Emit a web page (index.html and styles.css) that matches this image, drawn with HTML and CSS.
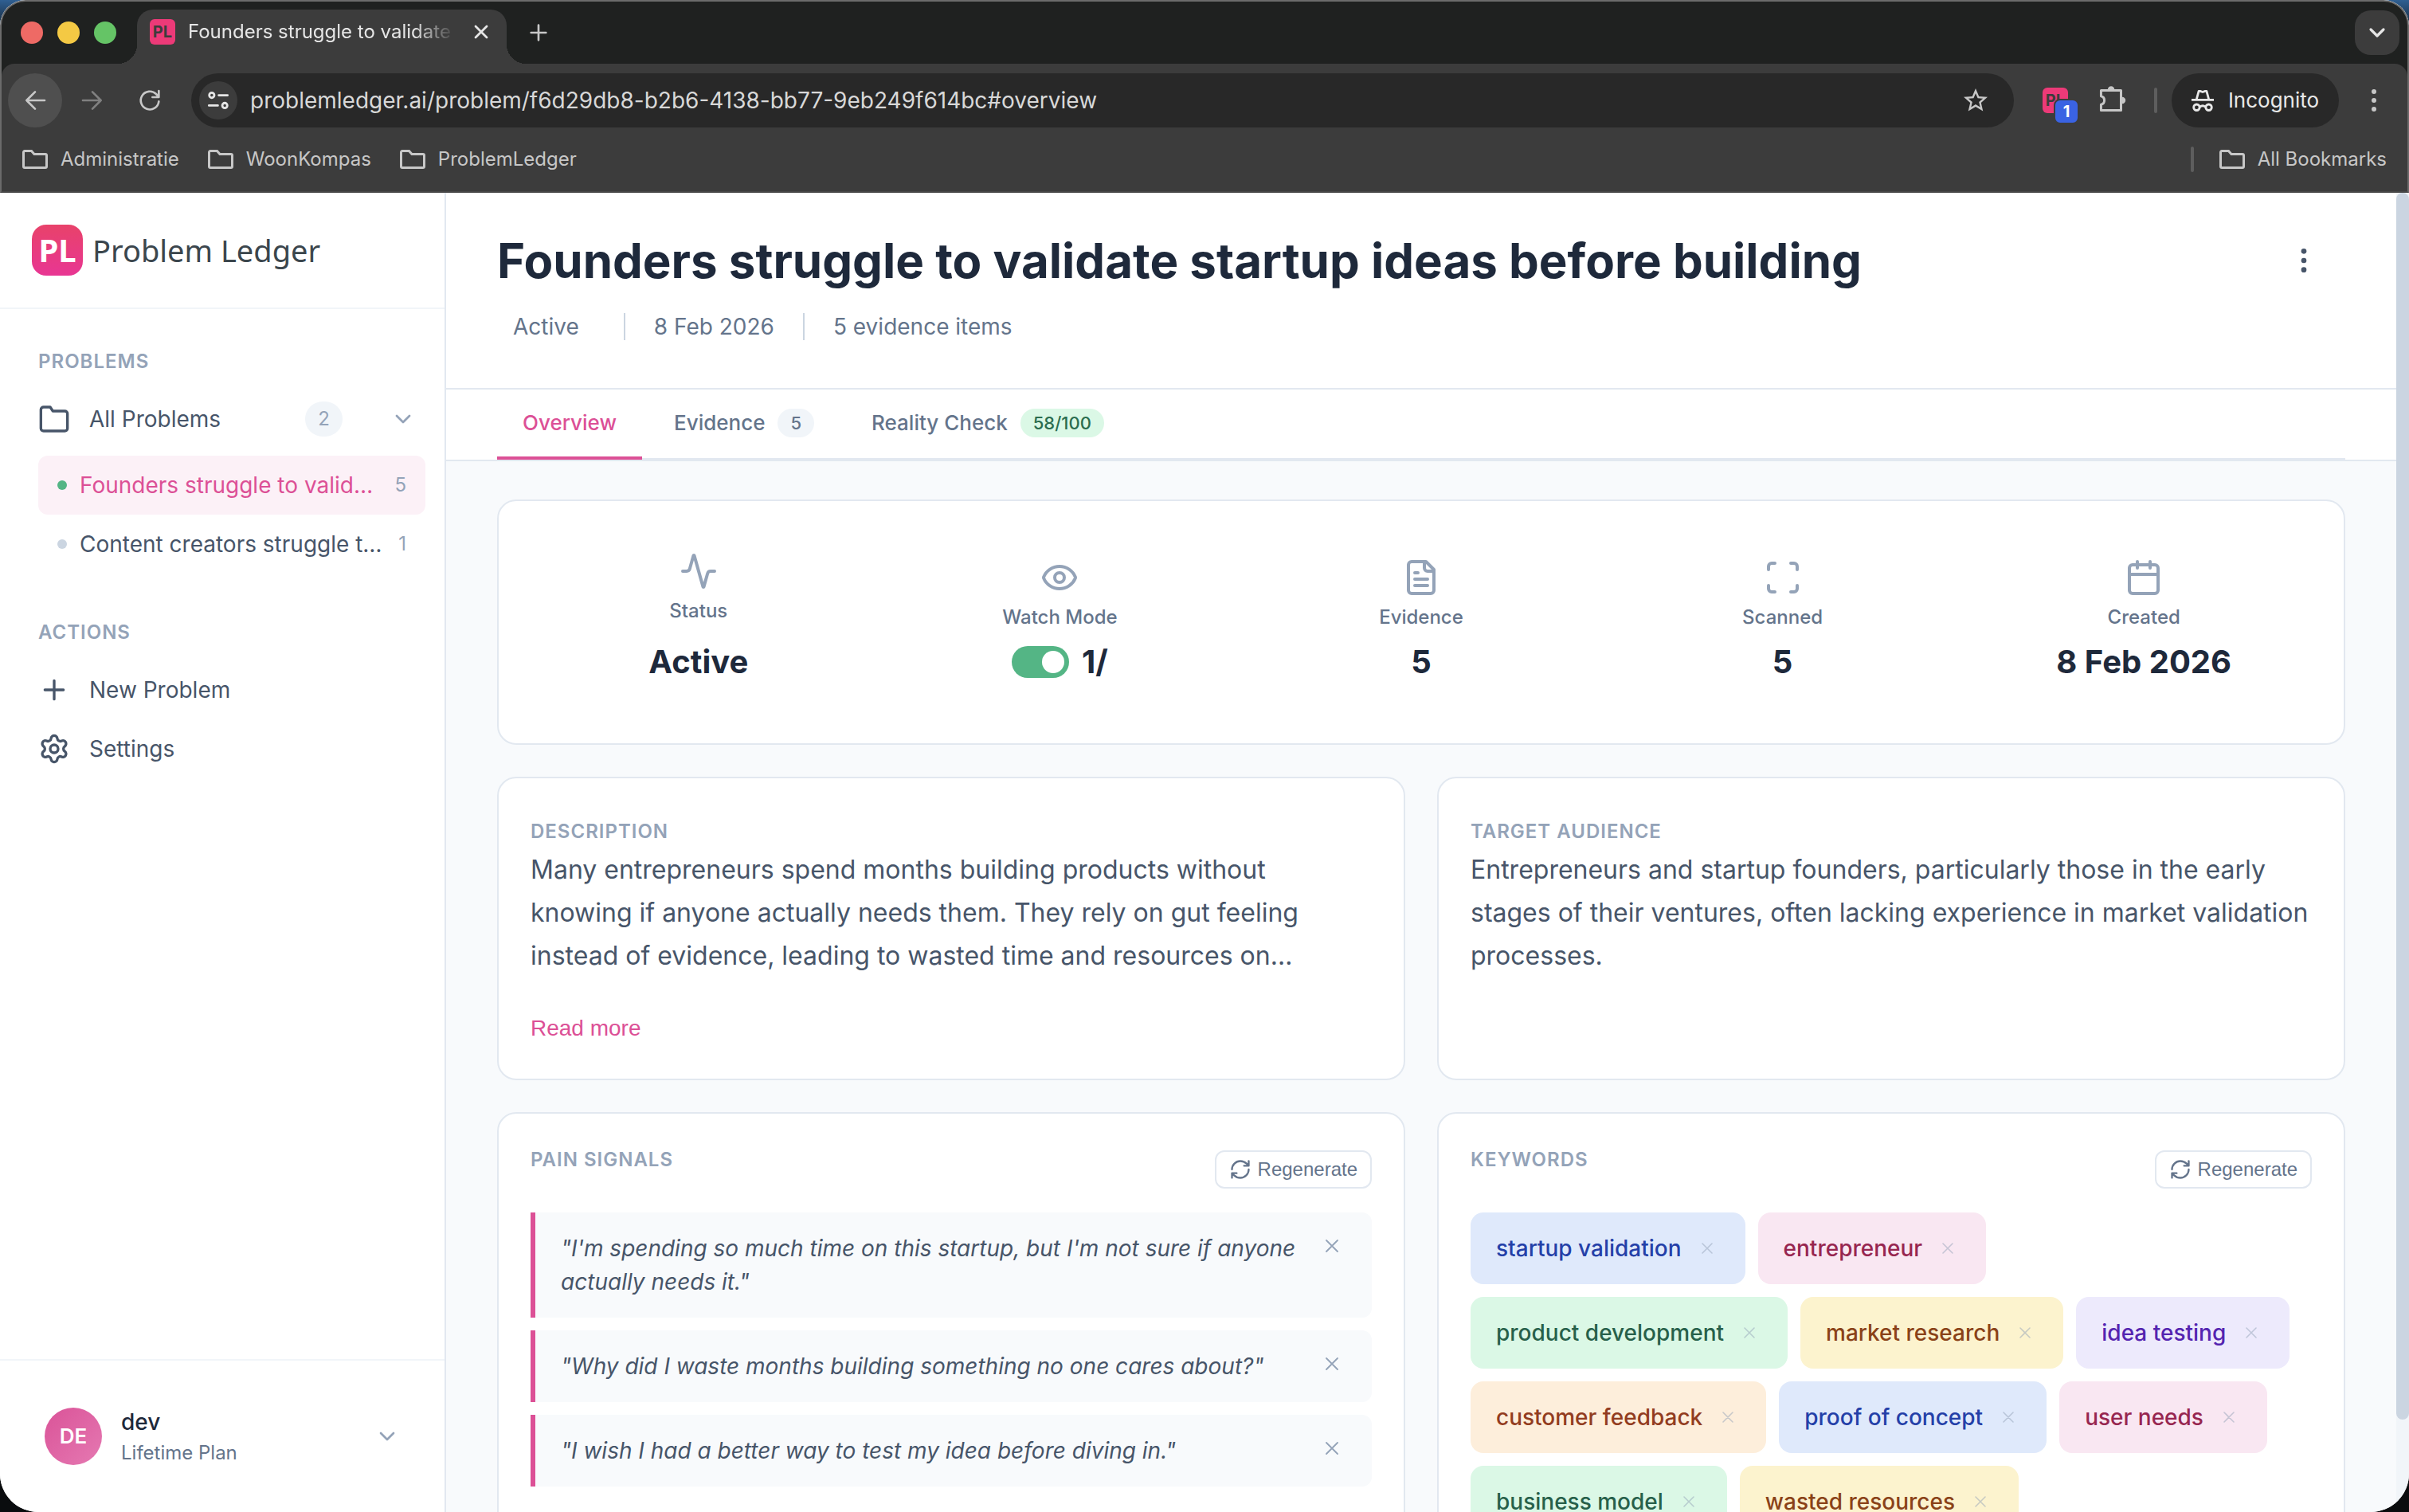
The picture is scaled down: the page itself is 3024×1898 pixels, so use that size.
FILE: index.html
```html
<!DOCTYPE html>
<html lang="en">
<head>
<meta charset="utf-8">
<meta name="viewport" content="width=device-width, initial-scale=1">
<title>Founders struggle to validate startup ideas before building</title>
<link rel="stylesheet" href="styles.css">
</head>
<body>
<svg class="sprite" aria-hidden="true">
  <symbol id="i-folder" viewBox="0 0 24 24"><path d="M22 19a2 2 0 0 1-2 2H4a2 2 0 0 1-2-2V5a2 2 0 0 1 2-2h5l2 3h9a2 2 0 0 1 2 2z"/></symbol>
  <symbol id="i-chevron" viewBox="0 0 24 24"><path d="m6 9 6 6 6-6"/></symbol>
  <symbol id="i-plus" viewBox="0 0 24 24"><path d="M5 12h14M12 5v14"/></symbol>
  <symbol id="i-x" viewBox="0 0 24 24"><path d="M18 6 6 18M6 6l12 12"/></symbol>
  <symbol id="i-refresh" viewBox="0 0 24 24"><path d="M3 12a9 9 0 0 1 9-9 9.75 9.75 0 0 1 6.74 2.74L21 8M21 3v5h-5M21 12a9 9 0 0 1-9 9 9.75 9.75 0 0 1-6.74-2.74L3 16M8 16H3v5"/></symbol>
  <symbol id="i-bookmark-folder" viewBox="0 0 32 24"><path d="M3 1.500h8.500l3.500 4h14a1.500 1.500 0 0 1 1.500 1.500v14a1.500 1.500 0 0 1-1.500 1.500H3a1.500 1.500 0 0 1-1.500-1.500V3A1.500 1.500 0 0 1 3 1.500z"/></symbol>
</svg>

<div class="window">
  <header class="browser">
    <div class="tabstrip">
      <div class="lights"><span class="light red"></span><span class="light yellow"></span><span class="light green"></span></div>
      <div class="tab">
        <span class="favicon">PL</span>
        <span class="tab-title">Founders struggle to validate</span>
        <button class="chrome-btn tab-close" aria-label="Close tab"><svg class="icon s28 heavy"><use href="#i-x"/></svg></button>
      </div>
      <button class="chrome-btn new-tab" aria-label="New tab"><svg class="icon s32"><use href="#i-plus"/></svg></button>
      <button class="chrome-btn tab-search" aria-label="Search tabs"><svg class="icon s32 heavy"><use href="#i-chevron"/></svg></button>
    </div>
    <div class="toolbar">
      <div class="nav-buttons">
        <button class="chrome-btn nav-btn back" aria-label="Back"><svg class="icon s32" viewBox="0 0 24 24"><path d="M21 12H4M12 4l-8 8 8 8"/></svg></button>
        <button class="chrome-btn nav-btn forward" aria-label="Forward"><svg class="icon s32" viewBox="0 0 24 24"><path d="M3 12h17M12 4l8 8-8 8"/></svg></button>
        <button class="chrome-btn nav-btn" aria-label="Reload"><svg class="icon s32" viewBox="0 0 24 24"><path d="M20.500 13A8.500 8.500 0 1 1 18 6l2.500 2.800M20.500 3v6h-6"/></svg></button>
      </div>
      <div class="omnibox">
        <button class="chrome-btn site-info" aria-label="Site information"><svg class="icon s28 heavy" viewBox="0 0 24 24"><circle cx="5" cy="6.500" r="2.700"/><path d="M12.500 6.500H22M2 17.500h9.500"/><circle cx="19" cy="17.500" r="2.700"/></svg></button>
        <input class="url" type="text" aria-label="Address" value="problemledger.ai/problem/f6d29db8-b2b6-4138-bb77-9eb249f614bc#overview">
        <button class="chrome-btn" aria-label="Bookmark this tab"><svg class="s36 solid" viewBox="0 0 24 24"><path d="M22 9.240l-7.190-.620L12 2 9.190 8.630 2 9.240l5.460 4.730L5.820 21 12 17.270 18.180 21l-1.630-7.030L22 9.240zM12 15.400l-3.760 2.270 1-4.280-3.320-2.880 4.380-.38L12 6.100l1.710 4.040 4.380.38-3.320 2.880 1 4.280L12 15.400z"/></svg></button>
      </div>
      <div class="extensions">
        <button class="chrome-btn nav-btn ext" aria-label="Problem Ledger extension"><span class="favicon">PL</span><span class="ext-badge">1</span></button>
        <button class="chrome-btn nav-btn" aria-label="Extensions"><svg class="icon s36" viewBox="0 0 24 24"><path d="M2.300 3.700h16.700v16.700H2.300v-4.900a3.600 3.600 0 0 0 0-7z"/><path class="fill" d="M8.400 3a2.300 2.300 0 0 1 4.600 0zM20 9.700a2.300 2.300 0 0 1 0 4.600z"/></svg></button>
      </div>
      <span class="bar-divider"></span>
      <button class="chrome-btn incognito"><svg class="icon s28 heavy" viewBox="0 0 24 24"><path d="M0 11.500h24M5.500 10.500 7.800 2h1.500l2.700 1 2.700-1h1.500l2.300 8.500M9 19c2-1.600 4-1.600 6 0"/><circle cx="5.500" cy="19.500" r="3.200"/><circle cx="18.500" cy="19.500" r="3.200"/></svg>Incognito</button>
      <button class="chrome-btn nav-btn menu-btn" aria-label="Browser menu"><svg class="s36 solid" viewBox="0 0 24 24"><circle cx="12" cy="4.700" r="2"/><circle cx="12" cy="12" r="2"/><circle cx="12" cy="19.300" r="2"/></svg></button>
    </div>
    <nav class="bookmarks" aria-label="Bookmarks">
      <button class="chrome-btn bookmark"><svg class="folder-icon"><use href="#i-bookmark-folder"/></svg>Administratie</button>
      <button class="chrome-btn bookmark"><svg class="folder-icon"><use href="#i-bookmark-folder"/></svg>WoonKompas</button>
      <button class="chrome-btn bookmark"><svg class="folder-icon"><use href="#i-bookmark-folder"/></svg>ProblemLedger</button>
      <span class="bar-divider push"></span>
      <button class="chrome-btn bookmark"><svg class="folder-icon"><use href="#i-bookmark-folder"/></svg>All Bookmarks</button>
    </nav>
  </header>

  <div class="app">
    <aside class="sidebar">
      <a class="brand" href="#"><span class="brand-mark">PL</span><span class="brand-name">Problem Ledger</span></a>
      <nav class="side-nav">
        <section>
          <h2 class="label side-label">PROBLEMS</h2>
          <button class="side-row"><svg class="icon s40"><use href="#i-folder"/></svg>All Problems<span class="count-pill">2</span><svg class="icon s32 muted"><use href="#i-chevron"/></svg></button>
          <div class="problem-list">
            <a class="problem active" href="#overview"><span class="dot"></span><span class="problem-name">Founders struggle to valid…</span><span class="problem-count">5</span></a>
            <a class="problem" href="#"><span class="dot"></span><span class="problem-name">Content creators struggle t…</span><span class="problem-count">1</span></a>
          </div>
        </section>
        <section>
          <h2 class="label side-label">ACTIONS</h2>
          <a class="side-row" href="#"><svg class="icon s40"><use href="#i-plus"/></svg>New Problem</a>
          <a class="side-row" href="#"><svg class="icon s40" viewBox="0 0 24 24"><path d="M9.671 4.136a2.340 2.340 0 0 1 4.659 0 2.340 2.340 0 0 0 3.319 1.915 2.340 2.340 0 0 1 2.330 4.033 2.340 2.340 0 0 0 0 3.831 2.340 2.340 0 0 1-2.330 4.033 2.340 2.340 0 0 0-3.319 1.915 2.340 2.340 0 0 1-4.659 0 2.340 2.340 0 0 0-3.320-1.915 2.340 2.340 0 0 1-2.330-4.033 2.340 2.340 0 0 0 0-3.831A2.340 2.340 0 0 1 6.350 6.051a2.340 2.340 0 0 0 3.319-1.915"/><circle cx="12" cy="12" r="3"/></svg>Settings</a>
        </section>
      </nav>
      <button class="account">
        <span class="avatar">DE</span>
        <span class="account-text"><span class="account-name">dev</span><span class="account-plan">Lifetime Plan</span></span>
        <svg class="icon s32 muted"><use href="#i-chevron"/></svg>
      </button>
    </aside>

    <main class="main">
      <header class="page-head">
        <div class="title-row">
          <h1>Founders struggle to validate startup ideas before building</h1>
          <button class="kebab" aria-label="More options"><svg class="s40 solid" viewBox="0 0 24 24"><circle cx="12" cy="5" r="2"/><circle cx="12" cy="12" r="2"/><circle cx="12" cy="19" r="2"/></svg></button>
        </div>
        <div class="meta"><span class="meta-status">Active</span><span>8 Feb 2026</span><span>5 evidence items</span></div>
      </header>
      <div class="tabs-bar">
        <nav class="tabs">
          <a class="page-tab current" href="#overview">Overview</a>
          <a class="page-tab" href="#evidence">Evidence<span class="tab-pill">5</span></a>
          <a class="page-tab" href="#reality">Reality Check<span class="tab-pill good">58/100</span></a>
        </nav>
      </div>

      <div class="content">
        <section class="card stats">
          <div class="stat">
            <svg class="icon s48 muted" viewBox="0 0 24 24"><path d="M22 12h-2.480a2 2 0 0 0-1.930 1.460l-2.350 8.360a.25.25 0 0 1-.48 0L9.240 2.180a.25.25 0 0 0-.48 0l-2.350 8.360A2 2 0 0 1 4.490 12H2"/></svg>
            <span class="stat-label">Status</span><span class="stat-value tall">Active</span>
          </div>
          <div class="stat">
            <svg class="icon s48 muted" viewBox="0 0 24 24"><path d="M2.062 12.348a1 1 0 0 1 0-.696 10.750 10.750 0 0 1 19.876 0 1 1 0 0 1 0 .696 10.750 10.750 0 0 1-19.876 0"/><circle cx="12" cy="12" r="3"/></svg>
            <label class="stat-label" for="watch">Watch Mode</label><span class="stat-value"><input class="toggle" type="checkbox" id="watch" checked>1/</span>
          </div>
          <div class="stat">
            <svg class="icon s48 muted" viewBox="0 0 24 24"><path d="M15 2H6a2 2 0 0 0-2 2v16a2 2 0 0 0 2 2h12a2 2 0 0 0 2-2V7zM14 2v4a2 2 0 0 0 2 2h4M10 9H8M16 13H8M16 17H8"/></svg>
            <span class="stat-label">Evidence</span><span class="stat-value">5</span>
          </div>
          <div class="stat">
            <svg class="icon s48 muted" viewBox="0 0 24 24"><path d="M3 7V5a2 2 0 0 1 2-2h2M17 3h2a2 2 0 0 1 2 2v2M21 17v2a2 2 0 0 1-2 2h-2M7 21H5a2 2 0 0 1-2-2v-2"/></svg>
            <span class="stat-label">Scanned</span><span class="stat-value">5</span>
          </div>
          <div class="stat">
            <svg class="icon s48 muted" viewBox="0 0 24 24"><rect x="3" y="4" width="18" height="18" rx="2"/><path d="M8 2v4M16 2v4M3 10h18"/></svg>
            <span class="stat-label">Created</span><span class="stat-value">8 Feb 2026</span>
          </div>
        </section>

        <div class="pair">
          <section class="card text-card">
            <h2 class="label">DESCRIPTION</h2>
            <p>Many entrepreneurs spend months building products without knowing if anyone actually needs them. They rely on gut feeling instead of evidence, leading to wasted time and resources on…</p>
            <button class="read-more">Read more</button>
          </section>
          <section class="card text-card">
            <h2 class="label">TARGET AUDIENCE</h2>
            <p>Entrepreneurs and startup founders, particularly those in the early stages of their ventures, often lacking experience in market validation processes.</p>
          </section>
        </div>

        <div class="pair">
          <section class="card list-card">
            <div class="card-head"><h2 class="label">PAIN SIGNALS</h2><button class="regenerate"><svg class="icon s28"><use href="#i-refresh"/></svg>Regenerate</button></div>
            <ul class="signals">
              <li class="signal"><q>I'm spending so much time on this startup, but I'm not sure if anyone actually needs it.</q><button class="remove" aria-label="Remove"><svg class="icon s28 thin"><use href="#i-x"/></svg></button></li>
              <li class="signal"><q>Why did I waste months building something no one cares about?</q><button class="remove" aria-label="Remove"><svg class="icon s28 thin"><use href="#i-x"/></svg></button></li>
              <li class="signal"><q>I wish I had a better way to test my idea before diving in.</q><button class="remove" aria-label="Remove"><svg class="icon s28 thin"><use href="#i-x"/></svg></button></li>
            </ul>
          </section>
          <section class="card list-card">
            <div class="card-head"><h2 class="label">KEYWORDS</h2><button class="regenerate"><svg class="icon s28"><use href="#i-refresh"/></svg>Regenerate</button></div>
            <ul class="keywords">
              <li class="keyword blue">startup validation<button aria-label="Remove"><svg class="icon s24 thin"><use href="#i-x"/></svg></button></li>
              <li class="keyword pink">entrepreneur<button aria-label="Remove"><svg class="icon s24 thin"><use href="#i-x"/></svg></button></li>
              <li class="keyword green">product development<button aria-label="Remove"><svg class="icon s24 thin"><use href="#i-x"/></svg></button></li>
              <li class="keyword amber">market research<button aria-label="Remove"><svg class="icon s24 thin"><use href="#i-x"/></svg></button></li>
              <li class="keyword violet">idea testing<button aria-label="Remove"><svg class="icon s24 thin"><use href="#i-x"/></svg></button></li>
              <li class="keyword orange">customer feedback<button aria-label="Remove"><svg class="icon s24 thin"><use href="#i-x"/></svg></button></li>
              <li class="keyword blue">proof of concept<button aria-label="Remove"><svg class="icon s24 thin"><use href="#i-x"/></svg></button></li>
              <li class="keyword pink">user needs<button aria-label="Remove"><svg class="icon s24 thin"><use href="#i-x"/></svg></button></li>
              <li class="keyword green">business model<button aria-label="Remove"><svg class="icon s24 thin"><use href="#i-x"/></svg></button></li>
              <li class="keyword amber">wasted resources<button aria-label="Remove"><svg class="icon s24 thin"><use href="#i-x"/></svg></button></li>
            </ul>
          </section>
        </div>
      </div>
    </main>
    <div class="scrollbar"><div class="scroll-thumb"></div></div>
  </div>
</div>
</body>
</html>
```
FILE: styles.css
```css
:root {
  --pink: #dc5096;
  --ink: #1e293b;
  --slate: #475569;
  --soft: #64748b;
  --muted: #94a3b8;
  --line: #e2e8f0;
  --faint: #f1f5f9;
  --wash: #f8fafc;
  --chrome: #3c3c3c;
  --chrome-text: #c7c7c7;
}

* { box-sizing: border-box; }

body {
  margin: 0;
  height: 100vh;
  overflow: hidden;
  background: linear-gradient(#2f5f92, #0a0c0e 48px);
  font-family: Inter, "Liberation Sans", sans-serif;
  font-size: 28px;
  line-height: 42px;
  color: var(--slate);
}

h1, h2, p, ul { margin: 0; padding: 0; }
ul { list-style: none; }
a { color: inherit; text-decoration: none; }
button { margin: 0; padding: 0; border: 0; background: none; color: inherit; font: inherit; text-align: left; }

.sprite { position: absolute; width: 0; height: 0; }
.icon { flex: none; fill: none; stroke: currentColor; stroke-width: 2; stroke-linecap: round; stroke-linejoin: round; }
.icon.heavy { stroke-width: 2.4; }
.icon.thin { stroke-width: 1.6; }
.icon .fill { fill: currentColor; stroke-width: 1; }
.solid { flex: none; fill: currentColor; }
.muted { color: var(--muted); }
.s24 { width: 24px; height: 24px; }
.s28 { width: 28px; height: 28px; }
.s32 { width: 32px; height: 32px; }
.s36 { width: 36px; height: 36px; }
.s40 { width: 40px; height: 40px; }
.s48 { width: 48px; height: 48px; }

.window {
  display: flex;
  flex-direction: column;
  height: 100%;
  overflow: hidden;
  border-radius: 32px 32px 48px 48px;
  background: #fff;
}

/* Browser chrome */
.browser {
  flex: none;
  border: 2px solid #6b6b6b;
  border-bottom-color: #474747;
  border-radius: 32px 32px 0 0;
  background: #1f2120;
  color: var(--chrome-text);
}
.chrome-btn { display: flex; align-items: center; justify-content: center; flex: none; }
.tabstrip { display: flex; align-items: center; height: 78px; padding: 0 10px 0 24px; }
.lights { display: flex; gap: 18px; }
.light { width: 28px; height: 28px; border-radius: 50%; }
.red { background: #ee6a65; }
.yellow { background: #f4c944; }
.green { background: #65c466; }
.tab {
  position: relative;
  display: flex;
  align-items: center;
  align-self: flex-end;
  width: 464px;
  height: 68px;
  margin-left: 26px;
  padding: 0 16px 12px;
  border-radius: 20px 20px 0 0;
  background: var(--chrome);
}
.tab::before, .tab::after { content: ""; position: absolute; bottom: 0; width: 24px; height: 24px; }
.tab::before { right: 100%; background: radial-gradient(circle at 0 0, transparent 24px, var(--chrome) 24px); }
.tab::after { left: 100%; background: radial-gradient(circle at 100% 0, transparent 24px, var(--chrome) 24px); }
.favicon {
  width: 32px;
  height: 32px;
  border-radius: 6px;
  background: #ec3a78;
  color: var(--chrome);
  font-size: 20px;
  font-weight: 700;
  line-height: 32px;
  text-align: center;
}
.tab-title {
  width: 336px;
  margin-left: 16px;
  overflow: hidden;
  white-space: nowrap;
  font-size: 24px;
  line-height: 32px;
  color: #e6e6e6;
  -webkit-mask-image: linear-gradient(90deg, #000 84%, transparent);
  mask-image: linear-gradient(90deg, #000 84%, transparent);
}
.tab-close { margin-left: 18px; color: #e6e6e6; }
.new-tab { margin-left: 24px; }
.tab-search { width: 56px; height: 56px; margin-left: auto; border-radius: 20px; background: var(--chrome); color: #e6e6e6; }

.toolbar {
  display: flex;
  align-items: center;
  padding: 12px 8px 0;
  border-radius: 16px 16px 0 0;
  background: var(--chrome);
}
.nav-buttons, .extensions { display: flex; gap: 4px; }
.nav-btn { width: 68px; height: 68px; border-radius: 50%; }
.back { background: #4f4f4f; }
.forward { color: #808080; }
.omnibox {
  display: flex;
  flex: 1;
  align-items: center;
  gap: 16px;
  height: 68px;
  margin: 0 18px;
  padding: 0 30px 0 10px;
  border-radius: 34px;
  background: #282828;
}
.site-info { width: 48px; height: 48px; border-radius: 50%; background: var(--chrome); color: #e6e6e6; }
.url { flex: 1; min-width: 0; padding: 0; border: 0; outline: 0; background: none; color: #d8d8d8; font: 28px/42px Inter, "Liberation Sans", sans-serif; }
.ext { position: relative; }
.ext-badge {
  position: absolute;
  left: 32px;
  top: 32px;
  width: 32px;
  height: 32px;
  border: 2px solid var(--chrome);
  border-radius: 8px;
  background: #3a63e3;
  color: #fff;
  font-size: 20px;
  font-weight: 700;
  line-height: 28px;
  text-align: center;
}
.bar-divider { width: 4px; height: 32px; margin: 0 18px; border-radius: 2px; background: #5e5e5e; }
.bar-divider.push { margin: 0 -4px 0 auto; }
.incognito { gap: 18px; width: 210px; height: 68px; border-radius: 34px; background: #282828; color: #e8e8e8; font-size: 26px; }
.menu-btn { margin-left: 10px; }
.bookmarks { display: flex; align-items: center; gap: 36px; height: 80px; padding: 0 26px; background: var(--chrome); font-size: 24px; line-height: 32px; }
.bookmark { gap: 16px; }
.folder-icon { flex: none; width: 32px; height: 24px; fill: none; stroke: currentColor; stroke-width: 3; }

/* Application */
.app { display: flex; flex: 1; min-height: 0; }
.sidebar { display: flex; flex-direction: column; flex: none; width: 560px; border-right: 2px solid var(--line); background: #fff; }
.brand { display: flex; align-items: center; gap: 12px; padding: 40px; border-bottom: 2px solid var(--faint); }
.brand-mark {
  width: 64px;
  height: 64px;
  border-radius: 18px;
  background: linear-gradient(#e8426a, #e83693);
  color: #fff;
  font: 700 40px/64px "Noto Sans", sans-serif;
  text-align: center;
}
.brand-name { font: 38px/64px "Noto Sans", sans-serif; color: #3b464d; }
.side-nav { display: flex; flex: 1; flex-direction: column; gap: 56px; padding: 48px 24px 0 48px; }
.label { font-size: 24px; font-weight: 600; line-height: 24px; letter-spacing: 1px; color: var(--muted); }
.side-label { margin: 6px 0 23px; }
.side-row { display: flex; align-items: center; gap: 24px; width: 100%; height: 74px; padding-right: 12px; }
.count-pill { margin: 0 36px 0 auto; padding: 0 16px; border-radius: 22px; background: var(--faint); color: var(--muted); font-size: 24px; line-height: 44px; }
.problem-list { margin-top: 9px; }
.problem { display: flex; align-items: center; gap: 16px; height: 74px; padding: 0 24px; border-radius: 12px; }
.problem.active { background: #fcf1f7; color: var(--pink); }
.dot { flex: none; width: 12px; height: 12px; border-radius: 50%; background: #cbd5e1; }
.active .dot { background: #54b585; }
.problem-name { flex: 1; overflow: hidden; white-space: nowrap; }
.problem-count { color: var(--muted); font-size: 24px; }
.account { display: flex; align-items: center; gap: 24px; height: 192px; padding: 0 56px; border-top: 2px solid var(--faint); }
.avatar {
  width: 72px;
  height: 72px;
  border-radius: 50%;
  background: linear-gradient(135deg, #da5398, #e579b2);
  color: #fff;
  font-size: 26px;
  font-weight: 600;
  line-height: 72px;
  text-align: center;
}
.account-text { display: flex; flex: 1; flex-direction: column; }
.account-name { font-weight: 500; color: var(--ink); }
.account-plan { font-size: 24px; line-height: 36px; color: var(--soft); }

.main { flex: 1; min-width: 0; overflow: hidden; background: var(--wash); }
.page-head { padding: 49px 64px 56px; border-bottom: 2px solid var(--line); background: #fff; }
.title-row { display: flex; align-items: center; justify-content: space-between; }
h1 { font-size: 60px; font-weight: 700; line-height: 72px; color: var(--ink); }
.kebab { display: flex; align-items: center; justify-content: center; width: 72px; height: 72px; margin-right: 16px; color: var(--slate); }
.meta { display: flex; align-items: center; margin-top: 26px; color: var(--soft); }
.meta span { display: flex; align-items: center; }
.meta span + span::before { content: ""; width: 2px; height: 34px; margin: 0 36px; background: #cbd5e1; }
.meta-status { padding: 0 0 0 20px; margin-right: 20px; }
.tabs-bar { padding: 0 64px; border-bottom: 2px solid var(--line); background: #fff; }
.tabs { display: flex; gap: 8px; border-bottom: 2px solid var(--line); }
.page-tab {
  display: flex;
  align-items: center;
  gap: 16px;
  height: 88px;
  margin-bottom: -2px;
  padding: 0 32px;
  border-bottom: 4px solid transparent;
  color: var(--soft);
  font-size: 26px;
  font-weight: 500;
}
.page-tab.current { border-color: var(--pink); color: var(--pink); }
.tab-pill { padding: 0 16px; border-radius: 18px; background: var(--faint); font-size: 22px; line-height: 36px; }
.tab-pill.good { background: #dbf8e6; color: #2b6d4f; }

.content { display: flex; flex-direction: column; gap: 40px; padding: 48px 64px; }
.card { border: 2px solid var(--line); border-radius: 24px; background: #fff; }
.stats { display: grid; grid-template-columns: repeat(5, 1fr); gap: 48px; align-items: center; padding: 48px; min-height: 308px; }
.stat { display: flex; flex-direction: column; align-items: center; gap: 8px; }
.stat-label { font-size: 24px; font-weight: 500; line-height: 36px; color: var(--soft); }
.stat-value { display: flex; align-items: center; gap: 16px; min-height: 60px; font-size: 40px; font-weight: 700; color: var(--ink); }
.stat-value.tall { min-height: 76px; }
.toggle { appearance: none; width: 72px; height: 40px; margin: 0; padding: 6px; border-radius: 20px; background: #cbd5e1; }
.toggle:checked { background: #54b585; }
.toggle::before { content: ""; display: block; width: 28px; height: 28px; border-radius: 50%; background: #fff; }
.toggle:checked::before { margin-left: auto; }

.pair { display: grid; grid-template-columns: 1fr 1fr; gap: 40px; }
.text-card { padding: 55px 40px 47px; }
.text-card p { margin-top: 9px; font-size: 32px; line-height: 54px; }
.read-more { display: block; margin-top: 48px; font: 28px/32px "Liberation Sans", Arial, sans-serif; color: var(--pink); }
.list-card { padding: 46px 40px; }
.card-head { display: flex; align-items: flex-start; justify-content: space-between; margin-bottom: 30px; }
.regenerate {
  display: flex;
  align-items: center;
  gap: 8px;
  height: 48px;
  padding: 0 16px;
  border: 2px solid var(--line);
  border-radius: 12px;
  color: var(--soft);
  font: 24px/28px "Liberation Sans", Arial, sans-serif;
}
.signals { display: flex; flex-direction: column; gap: 16px; }
.signal { display: flex; align-items: flex-start; gap: 16px; padding: 24px 32px; border-left: 6px solid var(--pink); border-radius: 0 12px 12px 0; background: var(--wash); }
.signal q { flex: 1; font-style: italic; quotes: '"' '"'; }
.remove { display: flex; align-items: center; justify-content: center; width: 36px; height: 36px; color: var(--muted); }
.keywords { display: flex; flex-wrap: wrap; gap: 16px; }
.keyword { display: flex; align-items: center; gap: 16px; height: 90px; padding: 0 32px; border-radius: 16px; font-weight: 500; }
.keyword button { display: flex; align-items: center; justify-content: center; width: 32px; height: 32px; color: var(--muted); opacity: .5; }
.blue { background: #dfe9fb; color: #2440a8; }
.pink { background: #f9e7f2; color: #972650; }
.keyword.green { background: #dbf8e6; color: #27604a; }
.amber { background: #fcf3ce; color: #8a4218; }
.violet { background: #edeafc; color: #5424b0; }
.orange { background: #fdeedb; color: #923c20; }

.scrollbar { flex: none; width: 16px; background: var(--faint); }
.scroll-thumb { height: 93%; border-radius: 8px; background: #cbd5e1; }
```
